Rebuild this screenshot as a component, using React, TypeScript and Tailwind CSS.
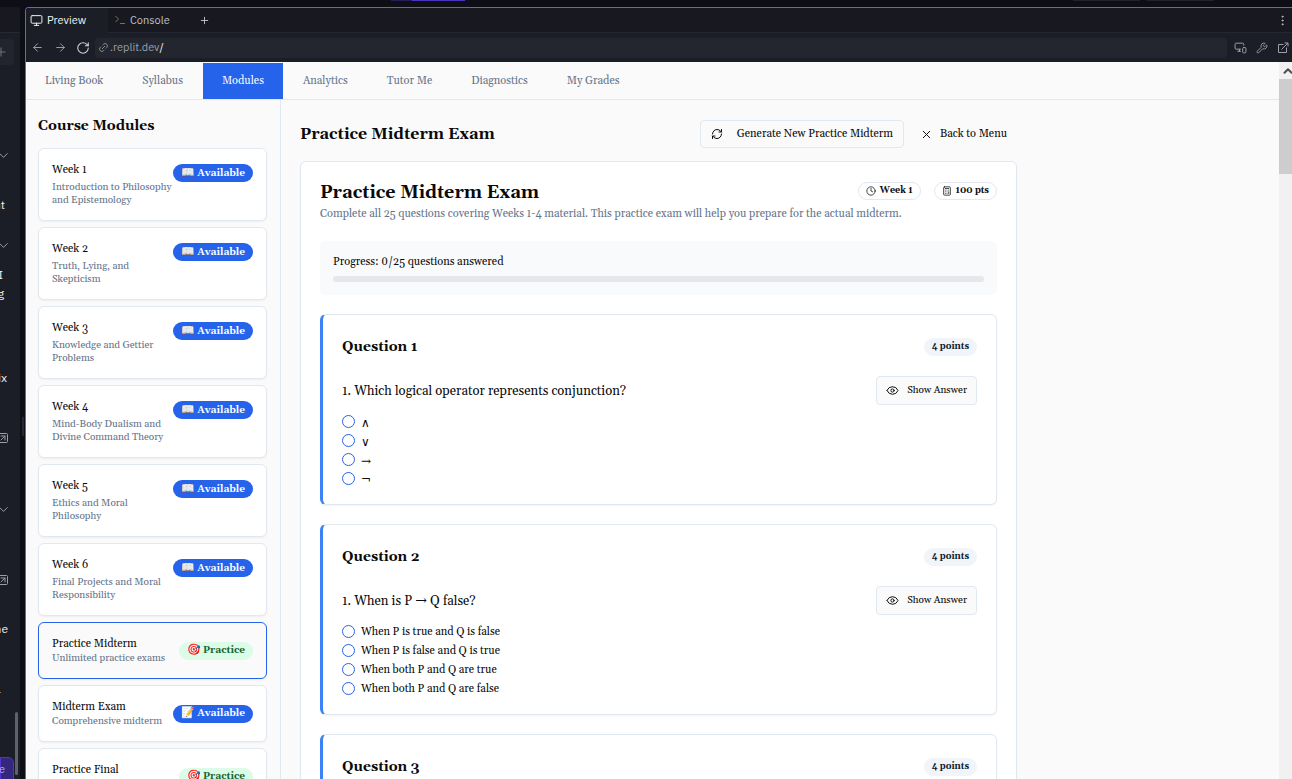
import type { ReactNode } from "react";
import {
  ArrowLeft,
  ArrowRight,
  Calculator,
  ChevronDown,
  ChevronUp,
  Clock,
  EllipsisVertical,
  Eye,
  Link2,
  Monitor,
  MonitorSmartphone,
  Plus,
  RefreshCw,
  RotateCw,
  SquareArrowUpRight,
  Wrench,
  X,
} from "lucide-react";

const tabs = ["Living Book", "Syllabus", "Modules", "Analytics", "Tutor Me", "Diagnostics", "My Grades"];

type Module = { title: string; text: string; emoji: string; status: "Available" | "Practice"; tall?: boolean; selected?: boolean };

const modules: Module[] = [
  { title: "Week 1", text: "Introduction to Philosophy and Epistemology", emoji: "📖", status: "Available", tall: true },
  { title: "Week 2", text: "Truth, Lying, and Skepticism", emoji: "📖", status: "Available", tall: true },
  { title: "Week 3", text: "Knowledge and Gettier Problems", emoji: "📖", status: "Available", tall: true },
  { title: "Week 4", text: "Mind-Body Dualism and Divine Command Theory", emoji: "📖", status: "Available", tall: true },
  { title: "Week 5", text: "Ethics and Moral Philosophy", emoji: "📖", status: "Available", tall: true },
  { title: "Week 6", text: "Final Projects and Moral Responsibility", emoji: "📖", status: "Available", tall: true },
  { title: "Practice Midterm", text: "Unlimited practice exams", emoji: "🎯", status: "Practice", selected: true },
  { title: "Midterm Exam", text: "Comprehensive midterm", emoji: "📝", status: "Available" },
  { title: "Practice Final", text: "Unlimited practice exams", emoji: "🎯", status: "Practice" },
];

const Arrow = () => <span className="text-[14px] font-['DejaVu_Serif',serif]">→</span>;

const questions: { prompt: ReactNode; options: string[]; symbols?: boolean }[] = [
  { prompt: "Which logical operator represents conjunction?", options: ["∧", "∨", "→", "¬"], symbols: true },
  {
    prompt: <>When is P <Arrow /> Q false?</>,
    options: [
      "When P is true and Q is false",
      "When P is false and Q is true",
      "When both P and Q are true",
      "When both P and Q are false",
    ],
  },
  { prompt: "Which symbol represents negation?", options: ["∧", "∨", "→", "¬"], symbols: true },
];

function PromptIcon() {
  return (
    <svg width="12" height="12" viewBox="0 0 12 12" fill="none" stroke="currentColor" strokeWidth="1" className="text-[#777057]">
      <path d="M1.5 2 L4.5 5 L1.5 8 M6 9.5 H11" />
    </svg>
  );
}

function OpenIcon() {
  return (
    <svg width="12" height="12" viewBox="0 0 12 12" fill="none" stroke="currentColor" strokeWidth="1">
      <path d="M6.5 2.5 H1.5 V10.5 H9.5 V5.5 M4.5 7.5 L11 1 M7.5 1 H11 V4.5" />
    </svg>
  );
}

function ModuleCard({ m }: { m: Module }) {
  return (
    <button
      type="button"
      className={`flex w-full shrink-0 justify-between gap-1 rounded-md border p-[13px] text-left shadow-xs ${
        m.tall ? "items-start" : "items-center"
      } ${m.selected ? "border-[#2563eb] bg-[#fafafa]" : "border-[#e2e8f0] bg-white"}`}
    >
      <span className={`flex min-w-0 flex-1 flex-col ${m.tall ? "gap-[3px]" : ""}`}>
        <span className="text-[11px] leading-4 whitespace-nowrap text-[#0a0a0a]">{m.title}</span>
        <span className="-mr-1 text-[10px] leading-[13px] text-[#64748b]">{m.text}</span>
      </span>
      <span
        className={`flex h-[18px] shrink-0 items-center gap-0.5 rounded-full px-2 text-[10px] font-bold ${
          m.tall ? "mt-0.5" : ""
        } ${m.status === "Available" ? "bg-[#2563eb] text-[#f8fafc]" : "bg-[#dcfce7] text-[#166534]"}`}
      >
        <span className="text-[11px]">{m.emoji}</span>
        {m.status}
      </span>
    </button>
  );
}

function QuestionCard({ n, prompt, options, symbols }: { n: number; prompt: ReactNode; options: string[]; symbols?: boolean }) {
  return (
    <section className="shrink-0 rounded-md border border-l-[3px] border-[#e2e8f0] border-l-[#3b82f6] bg-white px-[19px] pt-[22px] pb-4 shadow-xs">
      <div className="flex items-center justify-between">
        <h3 className="pt-px text-[14px] leading-[18px] font-bold">Question {n}</h3>
        <span className="flex h-[18px] items-center rounded-full bg-[#f1f5f9] px-2 text-[9px] font-bold text-[#0f172a]">4 points</span>
      </div>
      <div className="mt-5 flex items-center justify-between">
        <p className="text-[13px] leading-[20px]">1. {prompt}</p>
        <button
          type="button"
          className="flex h-[29px] items-center gap-2 rounded border border-[#e2e8f0] bg-[#fafafa] px-[9px] text-[10px]"
        >
          <Eye size={13} strokeWidth={1.8} />
          Show Answer
        </button>
      </div>
      <div className="mt-[7px] flex flex-col">
        {options.map((o) => (
          <label key={o} className="flex h-[19px] items-center gap-1.5 text-[11px]">
            <input
              type="radio"
              name={`question-${n}`}
              className="size-[13px] appearance-none rounded-full border border-[#2563eb] bg-white checked:border-4"
            />
            <span className={symbols ? "pt-0.5 font-['DejaVu_Serif',serif] text-[12px]" : "pt-0.5"}>{o}</span>
          </label>
        ))}
      </div>
    </section>
  );
}

function WorkspaceEdge() {
  return (
    <aside className="relative flex w-5 shrink-0 flex-col items-start overflow-hidden rounded-tr-[4px] bg-[#1b1e27] text-[12px] text-[#f0f2f5]">
      <div className="h-[26px] w-full shrink-0 border-b border-[#262833] bg-[#171820]" />
      <button type="button" aria-label="New tab" className="mt-[6px] flex h-[26px] w-[14px] shrink-0 items-center justify-end rounded-r-[4px] bg-[#22252e] pr-1.5 text-[#70747f]">
        <Plus size={14} strokeWidth={1.7} className="shrink-0" />
      </button>
      <div className="mt-20 flex h-5 w-[11px] shrink-0 items-center justify-end text-[#9a9ea8]">
        <ChevronDown size={15} strokeWidth={1.6} className="shrink-0" />
      </div>
      <div className="mt-[30px] flex h-5 w-[5px] shrink-0 items-center justify-end">nt</div>
      <div className="mt-5 flex h-5 w-[11px] shrink-0 items-center justify-end text-[#9a9ea8]">
        <ChevronDown size={15} strokeWidth={1.6} className="shrink-0" />
      </div>
      <div className="mt-[10px] flex h-[19px] w-[3px] shrink-0 items-center justify-end">I</div>
      <div className="flex h-[19px] w-[4px] shrink-0 items-center justify-end">g</div>
      <div className="mt-[65px] flex h-5 w-[7px] shrink-0 items-center justify-end">ix</div>
      <div className="mt-10 flex h-5 w-[9px] shrink-0 items-center justify-end text-[#9a9ea8]">
        <SquareArrowUpRight size={12} strokeWidth={2} className="shrink-0" />
      </div>
      <div className="mt-[51px] flex h-5 w-[11px] shrink-0 items-center justify-end text-[#9a9ea8]">
        <ChevronDown size={15} strokeWidth={1.6} className="shrink-0" />
      </div>
      <div className="mt-[51px] flex h-5 w-[9px] shrink-0 items-center justify-end text-[#9a9ea8]">
        <SquareArrowUpRight size={12} strokeWidth={2} className="shrink-0" />
      </div>
      <div className="mt-[29px] flex h-5 w-2 shrink-0 items-center justify-end">ne</div>
      <div className="mt-[53px] h-px w-px shrink-0 bg-[#a8762f]" />
      <button type="button" className="mt-[64px] flex h-6 w-[14px] shrink-0 items-center justify-end rounded-tr-md border border-[#5535c9] bg-[#34277e] pr-2 text-[11px] text-[#b6a6ff]">
        e
      </button>
      <div className="absolute right-0.5 bottom-1 h-[63px] w-[3px] rounded bg-[#5d626c]" />
    </aside>
  );
}

export default function App() {
  return (
    <div className="flex h-screen flex-col overflow-hidden bg-[#0e0f16] font-['IBM_Plex_Sans','Inter',sans-serif]">
      <div className="flex h-[7px] shrink-0 justify-between pr-[78px] pl-[391px]">
        <div className="flex h-px">
          <div className="w-[21px] bg-[#261c58]" />
          <div className="w-[53px] bg-[#4a34bd]" />
        </div>
        <div className="flex h-px gap-[7px]">
          <div className="w-[67px] bg-[#20222c]" />
          <div className="w-[67px] bg-[#20222c]" />
        </div>
      </div>

      <div className="flex min-h-0 flex-1">
        <WorkspaceEdge />
        <div className="flex w-[5px] shrink-0 justify-center">
          <div className="mt-[410px] h-[19px] w-0.5 bg-[#252733]" />
        </div>

        <div className="flex min-w-0 flex-1 flex-col overflow-hidden rounded-tl-[4px] border-t border-l border-[#7059df]">
          <div className="flex h-[25px] shrink-0 items-stretch border-b border-[#242631] bg-[#171820] text-[11px] text-[#bfc3cb]">
            <button type="button" className="-mb-px flex w-[82px] items-center gap-1 bg-[#1b1e27] pl-1 text-[#f3f4f6]">
              <Monitor size={13} strokeWidth={1.8} />
              Preview
            </button>
            <button type="button" className="flex w-[83px] items-center gap-1 pl-1.5">
              <PromptIcon />
              Console
            </button>
            <button type="button" aria-label="Add tab" className="flex w-[26px] items-center justify-center">
              <Plus size={11} strokeWidth={2} />
            </button>
            <button type="button" aria-label="More" className="ml-auto flex items-center pr-[3px]">
              <EllipsisVertical size={13} strokeWidth={1.7} />
            </button>
          </div>

          <div className="flex h-[29px] shrink-0 items-center bg-[#1b1e27] pr-[3px] pl-[5px] text-[#9ca0aa]">
            <button type="button" aria-label="Back" className="mr-[10px]">
              <ArrowLeft size={13} strokeWidth={1.8} />
            </button>
            <button type="button" aria-label="Forward" className="mr-[9px]">
              <ArrowRight size={13} strokeWidth={1.8} />
            </button>
            <button type="button" aria-label="Reload" className="mr-[5px] text-[#d3d6db]">
              <RotateCw size={14} strokeWidth={1.8} />
            </button>
            <div className="flex h-5 min-w-0 flex-1 items-center gap-px rounded-[4px] bg-[#23262e] pl-[3px] text-[11px]">
              <Link2 size={11} className="-rotate-45" strokeWidth={1.7} />
              <span>
                .replit.dev<span className="text-[#f3f4f6]">/</span>
              </span>
            </div>
            <div className="ml-[7px] flex items-center gap-[9px]">
              <button type="button" aria-label="Device size">
                <MonitorSmartphone size={13} strokeWidth={1.8} />
              </button>
              <button type="button" aria-label="Developer tools">
                <Wrench size={12} strokeWidth={1.8} />
              </button>
              <button type="button" aria-label="Open in new window">
                <OpenIcon />
              </button>
            </div>
          </div>

          <div className="flex min-h-0 flex-1 bg-[#fafafa] font-['Gelasio','Georgia','Liberation_Serif',serif] text-[#0a0a0a]">
            <div className="flex min-w-0 flex-1 flex-col">
              <nav className="flex h-[38px] shrink-0 gap-px border-b border-[#e2e8f0] pt-px text-[11px]">
                {tabs.map((t) => (
                  <button
                    key={t}
                    type="button"
                    className={`flex items-center px-[19px] ${t === "Modules" ? "bg-[#2563eb] text-[#f8fafc]" : "text-[#64748b]"}`}
                  >
                    {t}
                  </button>
                ))}
              </nav>

              <div className="flex min-h-0 flex-1">
                <aside className="flex w-[255px] shrink-0 flex-col overflow-hidden border-r border-[#e2e8f0] pt-4 pr-[13px] pl-3">
                  <h2 className="mb-3 text-[14px] leading-5 font-bold">Course Modules</h2>
                  <div className="flex flex-col gap-1.5">
                    {modules.map((m) => (
                      <ModuleCard key={m.title} m={m} />
                    ))}
                  </div>
                </aside>

                <main className="flex min-w-0 flex-1 flex-col overflow-hidden px-[19px] pt-5">
                  <div className="flex w-full max-w-[717px] shrink-0 items-center justify-between">
                    <h1 className="text-[16px] leading-6 font-bold">Practice Midterm Exam</h1>
                    <div className="flex text-[11px]">
                      <button type="button" className="flex h-7 items-center gap-[14px] rounded border border-[#e2e8f0] px-[10px]">
                        <RefreshCw size={12} strokeWidth={2} />
                        <span className="pt-px">Generate New Practice Midterm</span>
                      </button>
                      <button type="button" className="flex h-7 items-center gap-[7px] pr-[10px] pl-4">
                        <X size={13} strokeWidth={1.8} />
                        <span className="pt-px">Back to Menu</span>
                      </button>
                    </div>
                  </div>

                  <div className="mt-[13px] w-full max-w-[717px] shrink-0 rounded-md border border-[#e2e8f0] bg-white px-[19px] pt-[19px] shadow-xs">
                    <div className="flex items-start justify-between">
                      <h2 className="text-[18px] leading-6 font-bold">Practice Midterm Exam</h2>
                      <div className="flex gap-[13px] pt-px text-[9px] font-bold">
                        <span className="flex h-[18px] items-center gap-1 rounded-full border border-[#e2e8f0] px-[7px]">
                          <Clock size={10} strokeWidth={1.8} />
                          Week 1
                        </span>
                        <span className="flex h-[18px] items-center gap-1 rounded-full border border-[#e2e8f0] px-[7px]">
                          <Calculator size={10} strokeWidth={1.8} />
                          100 pts
                        </span>
                      </div>
                    </div>
                    <p className="text-[11px] leading-[18px] text-[#64748b]">
                      Complete all 25 questions covering Weeks 1-4 material. This practice exam will help you prepare for the actual midterm.
                    </p>

                    <div className="mt-[18px] rounded-md bg-[#f9fafb] p-[13px]">
                      <p className="text-[11px] leading-4">Progress: 0/25 questions answered</p>
                      <div className="mt-1.5 h-1.5 rounded-full bg-[#e5e7eb]" />
                    </div>

                    <div className="mt-[19px] flex flex-col gap-[19px] pb-5">
                      {questions.map((q, i) => (
                        <QuestionCard key={i} n={i + 1} {...q} />
                      ))}
                    </div>
                  </div>
                </main>
              </div>
            </div>

            <div className="flex w-[13px] shrink-0 flex-col overflow-hidden bg-[#f1f1f1]">
              <div className="flex h-[17px] w-[17px] shrink-0 items-center justify-center text-[#505050]">
                <ChevronUp size={14} strokeWidth={3.5} />
              </div>
              <div className="h-[95px] shrink-0 bg-[#cdcdcd]" />
            </div>
          </div>
        </div>
      </div>
    </div>
  );
}
